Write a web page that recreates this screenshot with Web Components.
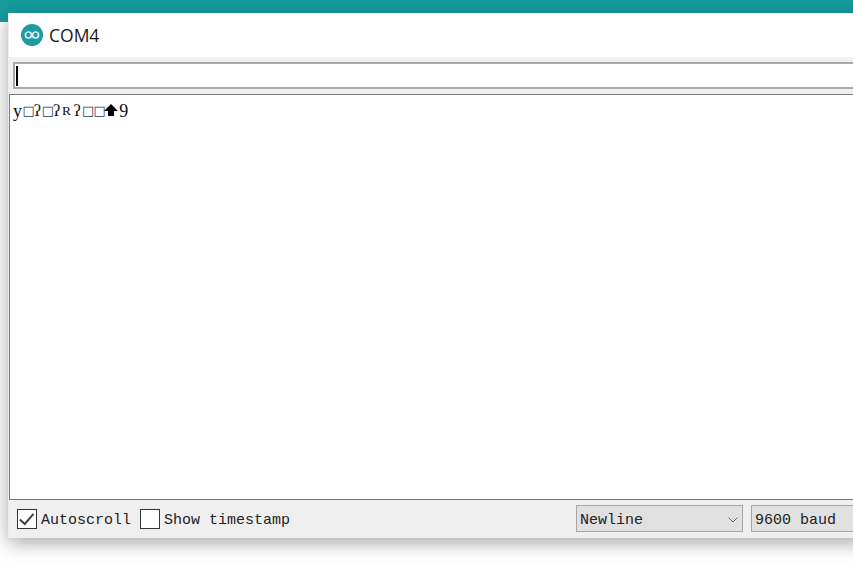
<!DOCTYPE html>
<html><head><meta charset="utf-8"><style>
html,body{margin:0;padding:0;background:#fff}
body{width:853px;height:574px;overflow:hidden}
</style></head><body>
<serial-monitor></serial-monitor>
<script>
function def(name, html){
  customElements.define(name, class extends HTMLElement{
    constructor(){super();this.attachShadow({mode:'open'}).innerHTML=html;}
  });
}
const MONO='"Liberation Mono","DejaVu Sans Mono",monospace';
const SERIF='"Liberation Serif","DejaVu Serif",serif';
def('app-logo',`<style>:host{display:block;width:22px;height:22px}svg{display:block}</style>
<svg width="22" height="22" viewBox="0 0 22 22"><circle cx="11" cy="11" r="11" fill="#1c9ba0"/>
<g fill="none" stroke="#d4eef0" stroke-width="1.7"><circle cx="7.4" cy="11" r="3"/><circle cx="14.6" cy="11" r="3"/></g></svg>`);
def('title-bar',`<style>:host{display:flex;align-items:center;gap:6px;height:44px;padding:0 0 1px 12px;background:#fff;box-sizing:border-box;font:17.5px "Open Sans","Noto Sans",sans-serif;color:#1a1a1a}</style>
<app-logo></app-logo><slot></slot>`);
def('send-input',`<style>:host{display:block;background:#f0f0f0;padding:5px 0 5px 4px;height:37px;box-sizing:border-box}
.f{height:27px;box-sizing:border-box;border:2px solid #a9a9a9;border-right:0;background:#fff;display:flex;align-items:center;padding-left:1px}
.c{width:1.5px;height:20px;background:#000}</style><div class="f"><div class="c"></div></div>`);
def('output-pane',`<style>:host{display:block;flex:1;min-height:0;background:#fff;border:1px solid #7a7a7a;border-right:0;box-sizing:border-box;padding:7px 0 0 2.5px;font:16px/18px ${SERIF};color:#111;white-space:pre}
.row{display:flex;height:18px;align-items:center}
.row span{display:block;width:10px;text-align:center;flex:none}
.row .y{font-size:18px}
.row .b{width:10.3px;font:13px/18px "DejaVu Sans",sans-serif;color:#1d3a5c}
.row .q{width:9px}
.row .r{width:11px;font-size:13.5px}
.row .n{font-size:18px;margin-left:1px}
.row svg{display:block;flex:none;margin:0 0 2px 0}
</style><div class="row"><span class="y">y</span><span class="b">□</span><span class="q">ʔ</span><span class="b">□</span><span class="q">ʔ</span><span class="r">R</span><span style="width:10px">ʔ</span><span class="b">□</span><span class="b" style="margin-left:1px">□</span><svg width="14" height="12" viewBox="0 0 14 12"><path d="M7 0 L14 7 L10 7 L10 12 L4 12 L4 7 L0 7 Z" fill="#000"/></svg><span class="n">9</span></div>`);
const CHK=`:host{display:inline-flex;align-items:center;gap:4px;font:15px ${MONO};color:#222}
.b{width:20px;height:20px;box-sizing:border-box;border:1.5px solid #333;background:#fff;display:block}
.l{display:block;margin-top:3px}
svg{display:block}`;
def('check-box',`<style>${CHK}</style>
<span class="b"><svg width="17" height="17" viewBox="0 0 17 17"><path d="M1.8 9.5 L6.8 14 L15.5 3.8" fill="none" stroke="#444" stroke-width="2"/></svg></span><span class="l"><slot></slot></span>`);
def('plain-check',`<style>${CHK}</style><span class="b"></span><span class="l"><slot></slot></span>`);
def('drop-down',`<style>:host{display:flex;flex:none;align-items:center;justify-content:space-between;height:27px;box-sizing:border-box;border:1px solid #a6a6a6;background:#e1e1e1;font:15px ${MONO};color:#222;padding:0 4px 0 3px}
:host([w="a"]){width:167px}
:host([w="b"]){width:117px}
.l{display:block;margin-top:3px}
svg{display:block;margin-top:2px}</style><span class="l"><slot></slot></span><svg width="10" height="6" viewBox="0 0 10 6"><path d="M0.5 0.5 L5 5 L9.5 0.5" fill="none" stroke="#666" stroke-width="1"/></svg>`);
def('status-bar',`<style>:host{display:flex;align-items:center;height:38px;background:#efefef;box-sizing:border-box;padding:0 0 1px 8px}
.gap{width:9px}.sp{flex:1}.g2{width:8px}</style>
<check-box>Autoscroll</check-box><div class="gap"></div><plain-check>Show timestamp</plain-check><div class="sp"></div>
<drop-down w="a">Newline</drop-down><div class="g2"></div><drop-down w="b">9600 baud</drop-down>`);
def('serial-monitor',`<style>:host{display:block;width:853px;height:574px;overflow:hidden;background:#fff}
.top{height:22px;background:#169c9e}
.win{margin:-9px 0 0 8px;width:860px;height:525px;box-sizing:border-box;border-left:1px solid #ececec;display:flex;flex-direction:column;box-shadow:0 5px 18px rgba(0,0,0,.35);position:relative}
.t{flex:none}</style>
<div class="top"></div>
<div class="win"><title-bar class="t">COM4</title-bar><send-input class="t"></send-input><output-pane></output-pane><status-bar class="t"></status-bar></div>`);
</script></body></html>
